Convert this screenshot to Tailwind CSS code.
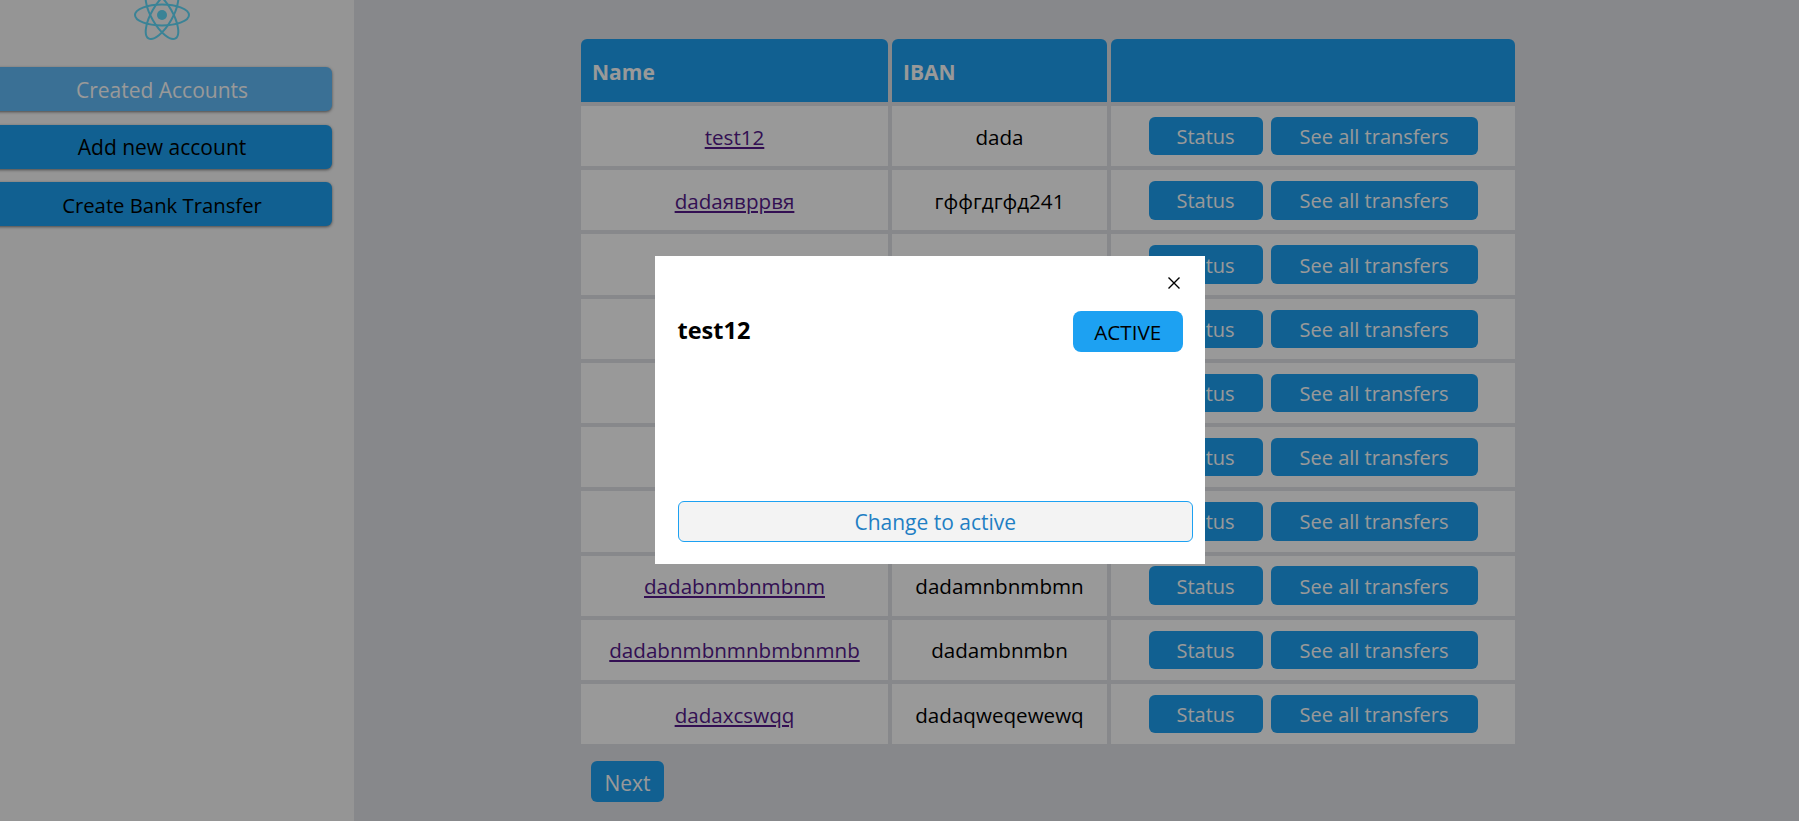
<!DOCTYPE html>
<html lang="en">
<head>
  <meta charset="UTF-8" />
  <title>Accounts</title>
  <script src="https://cdn.jsdelivr.net/npm/@tailwindcss/browser@4"></script>
</head>
<body class="h-[821px] overflow-hidden bg-[#e2e3e8] font-['Open_Sans',sans-serif] text-[20.6px] text-black">
  <div class="flex h-[821px]">
    <!-- sidebar -->
    <aside class="w-[354px] shrink-0 bg-[#f8f8f8]">
      <div class="flex h-[67px] justify-center pr-[30px]">
        <svg class="-mt-[15px] h-[60px] w-[60px]" viewBox="-30 -30 60 60" fill="none" stroke="#61dafb" stroke-width="2">
          <circle r="5" fill="#61dafb" stroke="none" />
          <ellipse rx="27" ry="10.5" />
          <ellipse rx="27" ry="10.5" transform="rotate(60)" />
          <ellipse rx="27" ry="10.5" transform="rotate(120)" />
        </svg>
      </div>
      <div class="-ml-2 flex w-[340px] flex-col gap-[13.5px]">
        <button class="h-[44px] rounded-md bg-[#61bbf8] pt-[3px] text-[21px] text-white shadow-[0_1px_3px_rgba(0,0,0,0.5)]">Created Accounts</button>
        <button class="h-[44px] rounded-md bg-[#1da1f2] pt-[2px] text-[21px] shadow-[0_1px_3px_rgba(0,0,0,0.5)]">Add new account</button>
        <button class="h-[44px] rounded-md bg-[#1da1f2] pt-[2px] text-[20.3px] shadow-[0_1px_3px_rgba(0,0,0,0.5)]">Create Bank Transfer</button>
      </div>
    </aside>

    <!-- accounts table -->
    <main class="flex-1 pl-[223px] pt-[35px]">
      <table class="w-[942px] table-fixed border-separate border-spacing-[4px]">
        <thead>
          <tr class="h-[63px] bg-[#1da1f2] text-left text-[21px] font-bold text-white">
            <th class="w-[307px] rounded-t-md pl-[11px] pt-[4px]">Name</th>
            <th class="w-[215px] rounded-t-md pl-[11px] pt-[4px]">IBAN</th>
            <th class="rounded-t-md"></th>
          </tr>
        </thead>
        <tbody class="text-center">
          <tr class="h-[60.22px] bg-white">
            <td class="pt-[2px]"><a href="#" class="text-[#551a8b] underline">test12</a></td>
            <td class="pt-[2px]">dada</td>
            <td><div class="flex justify-center gap-2 text-[20px]"><button class="h-[38.4px] w-[114px] rounded-md bg-[#1da1f2] pt-[2px] text-white">Status</button><button class="h-[38.4px] w-[207px] rounded-md bg-[#1da1f2] pt-[2px] text-white">See all transfers</button></div></td>
          </tr>
          <tr class="h-[60.22px] bg-white">
            <td class="pt-[2px]"><a href="#" class="text-[#551a8b] underline">dadaявррвя</a></td>
            <td class="pt-[2px]">гффгдгфд241</td>
            <td><div class="flex justify-center gap-2 text-[20px]"><button class="h-[38.4px] w-[114px] rounded-md bg-[#1da1f2] pt-[2px] text-white">Status</button><button class="h-[38.4px] w-[207px] rounded-md bg-[#1da1f2] pt-[2px] text-white">See all transfers</button></div></td>
          </tr>
          <tr class="h-[60.22px] bg-white">
            <td></td>
            <td></td>
            <td><div class="flex justify-center gap-2 text-[20px]"><button class="h-[38.4px] w-[114px] rounded-md bg-[#1da1f2] pt-[2px] text-white">Status</button><button class="h-[38.4px] w-[207px] rounded-md bg-[#1da1f2] pt-[2px] text-white">See all transfers</button></div></td>
          </tr>
          <tr class="h-[60.22px] bg-white">
            <td></td>
            <td></td>
            <td><div class="flex justify-center gap-2 text-[20px]"><button class="h-[38.4px] w-[114px] rounded-md bg-[#1da1f2] pt-[2px] text-white">Status</button><button class="h-[38.4px] w-[207px] rounded-md bg-[#1da1f2] pt-[2px] text-white">See all transfers</button></div></td>
          </tr>
          <tr class="h-[60.22px] bg-white">
            <td></td>
            <td></td>
            <td><div class="flex justify-center gap-2 text-[20px]"><button class="h-[38.4px] w-[114px] rounded-md bg-[#1da1f2] pt-[2px] text-white">Status</button><button class="h-[38.4px] w-[207px] rounded-md bg-[#1da1f2] pt-[2px] text-white">See all transfers</button></div></td>
          </tr>
          <tr class="h-[60.22px] bg-white">
            <td></td>
            <td></td>
            <td><div class="flex justify-center gap-2 text-[20px]"><button class="h-[38.4px] w-[114px] rounded-md bg-[#1da1f2] pt-[2px] text-white">Status</button><button class="h-[38.4px] w-[207px] rounded-md bg-[#1da1f2] pt-[2px] text-white">See all transfers</button></div></td>
          </tr>
          <tr class="h-[60.22px] bg-white">
            <td></td>
            <td></td>
            <td><div class="flex justify-center gap-2 text-[20px]"><button class="h-[38.4px] w-[114px] rounded-md bg-[#1da1f2] pt-[2px] text-white">Status</button><button class="h-[38.4px] w-[207px] rounded-md bg-[#1da1f2] pt-[2px] text-white">See all transfers</button></div></td>
          </tr>
          <tr class="h-[60.22px] bg-white">
            <td class="pt-[2px]"><a href="#" class="text-[#551a8b] underline">dadabnmbnmbnm</a></td>
            <td class="pt-[2px]">dadamnbnmbmn</td>
            <td><div class="flex justify-center gap-2 text-[20px]"><button class="h-[38.4px] w-[114px] rounded-md bg-[#1da1f2] pt-[2px] text-white">Status</button><button class="h-[38.4px] w-[207px] rounded-md bg-[#1da1f2] pt-[2px] text-white">See all transfers</button></div></td>
          </tr>
          <tr class="h-[60.22px] bg-white">
            <td class="pt-[2px]"><a href="#" class="text-[#551a8b] underline">dadabnmbnmnbmbnmnb</a></td>
            <td class="pt-[2px]">dadambnmbn</td>
            <td><div class="flex justify-center gap-2 text-[20px]"><button class="h-[38.4px] w-[114px] rounded-md bg-[#1da1f2] pt-[2px] text-white">Status</button><button class="h-[38.4px] w-[207px] rounded-md bg-[#1da1f2] pt-[2px] text-white">See all transfers</button></div></td>
          </tr>
          <tr class="h-[60.22px] bg-white">
            <td class="pt-[2px]"><a href="#" class="text-[#551a8b] underline">dadaxcswqq</a></td>
            <td class="pt-[2px]">dadaqweqewewq</td>
            <td><div class="flex justify-center gap-2 text-[20px]"><button class="h-[38.4px] w-[114px] rounded-md bg-[#1da1f2] pt-[2px] text-white">Status</button><button class="h-[38.4px] w-[207px] rounded-md bg-[#1da1f2] pt-[2px] text-white">See all transfers</button></div></td>
          </tr>
        </tbody>
      </table>
      <button class="ml-[14px] mt-[13px] h-[41px] w-[73px] rounded-md bg-[#1da1f2] pt-[4px] text-[21px] text-white">Next</button>
    </main>
  </div>

  <!-- status modal -->
  <div class="fixed inset-0 bg-black/40"></div>
  <div class="fixed left-[655px] top-[256px] flex h-[308px] w-[550px] flex-col bg-white pb-[22px] pl-[22.5px] pr-[12px] pt-[20px]">
    <div class="flex h-[14px] justify-end pr-[12px]">
      <svg class="h-[14px] w-[14px]" viewBox="0 0 14 14" stroke="#000" stroke-width="1.4" fill="none"><path d="M1.5 1.5l11 11M12.5 1.5l-11 11" /></svg>
    </div>
    <div class="mt-[21px] flex items-start justify-between pr-[10px]">
      <h2 class="mt-[4px] text-[23.5px] font-bold leading-[30px]">test12</h2>
      <button class="h-[41px] w-[110.5px] rounded-lg bg-[#1da1f2] pt-[2px]">ACTIVE</button>
    </div>
    <button class="mt-auto h-[41px] w-full rounded-md border border-[#1da1f2] bg-[#f3f3f3] pt-[3px] text-[21px] text-[#1f7fc4]">Change to active</button>
  </div>
</body>
</html>
